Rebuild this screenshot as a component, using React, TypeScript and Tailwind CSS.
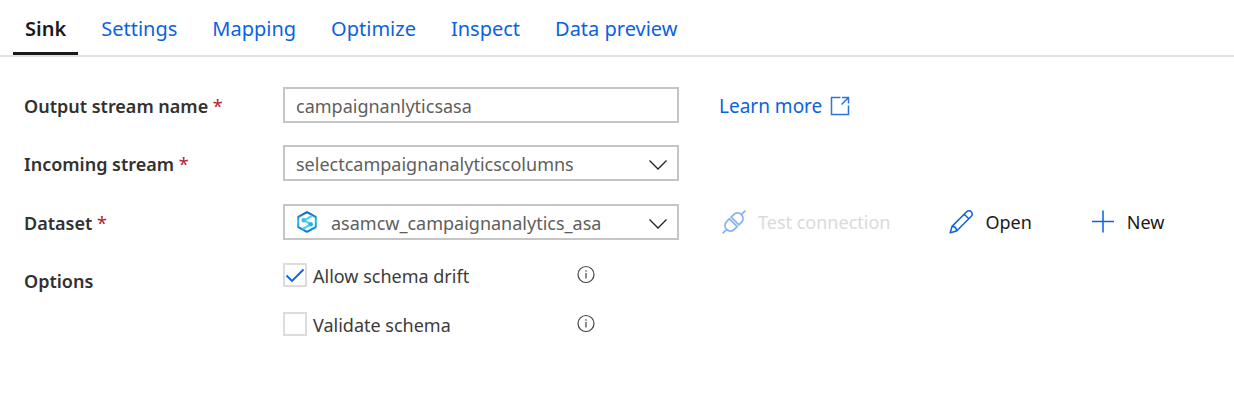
import React, { useState } from "react";

const tabs = ["Sink", "Settings", "Mapping", "Optimize", "Inspect", "Data preview"];

function Required() {
  return <span className="font-normal text-[#b3202c]"> *</span>;
}

function Chevron() {
  return (
    <svg className="pointer-events-none absolute top-[14px] right-[11px] h-3 w-5" viewBox="0 0 20 12" fill="none" stroke="#222" strokeWidth="1.3" aria-hidden="true">
      <path d="M1.500 1.500 10 10 18.500 1.500" />
    </svg>
  );
}

function SynapseIcon() {
  return (
    <svg className="pointer-events-none absolute top-[7px] left-3 h-[22px] w-6" viewBox="0 0 24 22" fill="none" aria-hidden="true">
      <defs>
        <linearGradient id="hexagon" x1="0" y1="0" x2="0" y2="1">
          <stop offset="0" stopColor="#0f5fb3" />
          <stop offset="0.450" stopColor="#35b8ec" />
          <stop offset="1" stopColor="#0878d4" />
        </linearGradient>
      </defs>
      <path d="M12 1.200 20.800 6v10L12 20.800 3.200 16V6Z" stroke="url(#hexagon)" strokeWidth="2" strokeLinejoin="round" />
      <path d="M17 4.800 9 9.300l7 4L7.500 18" stroke="#45d3ef" strokeWidth="2" />
      <circle cx="8.700" cy="9.200" r="2.200" fill="#35c1e8" />
      <circle cx="15.800" cy="13.300" r="2.200" fill="#28b5e6" />
    </svg>
  );
}

function ExternalIcon() {
  return (
    <svg className="h-5 w-5" viewBox="0 0 20 20" fill="none" stroke="#2b74e2" strokeWidth="1.500" aria-hidden="true">
      <path d="M10.500 1.500h-9v17h17V9.500M12 1.500h6.500v6M18.500 1.500l-7 7" />
    </svg>
  );
}

function PlugIcon() {
  return (
    <svg className="h-6 w-6" viewBox="0 0 24 24" fill="none" stroke="#85b2f3" strokeWidth="1.700" aria-hidden="true">
      <g transform="rotate(-45 12 12)">
        <path d="M-4 12H1.500M22.500 12H28M11 6.500v11H7a5.500 5.500 0 0 1 0-11ZM13.500 6.500v11H17a5.500 5.500 0 0 0 0-11Z" />
      </g>
    </svg>
  );
}

function PencilIcon() {
  return (
    <svg className="h-6 w-6" viewBox="0 0 24 24" fill="none" stroke="#0b62e0" strokeWidth="1.500" strokeLinejoin="round" aria-hidden="true">
      <path d="M1.200 22.800 3 16.400 17.700 1.700a3.200 3.200 0 0 1 4.600 4.600L7.600 21ZM15.200 4.200 19.800 8.800M3 16.400c2.800 0 4.600 1.800 4.600 4.600" />
    </svg>
  );
}

function PlusIcon() {
  return (
    <svg className="h-6 w-6" viewBox="0 0 24 24" fill="none" stroke="#0b62e0" strokeWidth="1.500" aria-hidden="true">
      <path d="M12 0.500v22M1 11.500h22" />
    </svg>
  );
}

function InfoButton({ label }: { label: string }) {
  return (
    <button type="button" aria-label={label} className="h-5 w-5">
      <svg viewBox="0 0 20 20" fill="none" stroke="#444" strokeWidth="1.200" aria-hidden="true">
        <circle cx="10" cy="9.500" r="8" />
        <path d="M10 8v5.500M10 5.300v1.400" />
      </svg>
    </button>
  );
}

function Option({ id, label, initial }: { id: string; label: string; initial: boolean }) {
  const [checked, setChecked] = useState(initial);
  return (
    <div className="flex h-6 items-center">
      <div className="flex w-[293px] items-center gap-[6px]">
        <span className="relative h-6 w-6 shrink-0">
          <input id={id} type="checkbox" checked={checked} onChange={(e) => setChecked(e.target.checked)} className="block h-6 w-6 appearance-none border-2 border-[#dcdcdc] bg-white" />
          {checked && (
            <svg className="pointer-events-none absolute inset-0" viewBox="0 0 24 24" fill="none" stroke="#0b62e0" strokeWidth="1.800" aria-hidden="true">
              <path d="M3.500 12.500 9 18 20.500 6.500" />
            </svg>
          )}
        </span>
        <label htmlFor={id} className="pt-0.5 text-[18px] leading-6 text-[#3c3b3a]">{label}</label>
      </div>
      <InfoButton label={"About " + label} />
    </div>
  );
}

const labelStyle = "self-start pt-[7px] text-[18px] font-semibold leading-6 text-[#323130]";
const fieldStyle = "block h-9 w-full appearance-none border-2 border-[#c5c5c5] bg-white text-[18px] text-[#605e5c]";

export default function App() {
  const [active, setActive] = useState("Sink");
  const [name, setName] = useState("campaignanlyticsasa");
  return (
    <main className="min-h-screen bg-white font-['Noto_Sans','Open_Sans',sans-serif] text-[#323130]">
      <nav role="tablist" className="flex gap-[11px] border-b-2 border-[#e2e2e2] pl-[13px]">
        {tabs.map((tab) => (
          <button
            key={tab}
            type="button"
            role="tab"
            aria-selected={tab === active}
            onClick={() => setActive(tab)}
            className={
              tab === active
                ? "h-[55px] border-b-3 border-[#1b1a19] px-3 pt-1.5 text-[20px] font-semibold text-[#1b1a19]"
                : "h-[55px] border-b-3 border-transparent px-3 pt-1.5 text-[20px] text-[#0b62e0]"
            }
          >
            {tab}
          </button>
        ))}
      </nav>
      <form className="grid grid-cols-[259px_396px_1fr] grid-rows-[36px_37px_37px_auto] gap-y-[22px] pt-[30px] pl-6" onSubmit={(e) => e.preventDefault()}>
        <label htmlFor="output" className={labelStyle}>Output stream name<Required /></label>
        <input id="output" value={name} onChange={(e) => setName(e.target.value)} className={fieldStyle + " px-[11px] pt-1.5 pb-1"} />
        <a href="#learn" className="ml-10 flex items-center gap-2 justify-self-start pt-0.5 text-[19px] leading-6 text-[#0b62e0]">
          Learn more
          <ExternalIcon />
        </a>

        <label htmlFor="incoming" className={labelStyle}>Incoming stream<Required /></label>
        <div className="relative">
          <select id="incoming" className={fieldStyle + " px-[11px] py-1"}>
            <option>selectcampaignanalyticscolumns</option>
          </select>
          <Chevron />
        </div>
        <span />

        <label htmlFor="dataset" className={labelStyle}>Dataset<Required /></label>
        <div className="relative">
          <SynapseIcon />
          <select id="dataset" className={fieldStyle + " py-1 pl-[46px]"}>
            <option>asamcw_campaignanalytics_asa</option>
          </select>
          <Chevron />
        </div>
        <div className="ml-[43px] flex h-9 items-center gap-[59px] text-[18px] leading-6 text-[#1b1a19]">
          <button type="button" disabled className="flex items-center gap-3 text-[#dadada]"><PlugIcon />Test connection</button>
          <button type="button" className="flex items-center gap-3"><PencilIcon />Open</button>
          <button type="button" className="flex items-center gap-3"><PlusIcon />New</button>
        </div>

        <span className="pt-1.5 text-[18px] font-semibold leading-6">Options</span>
        <div className="flex flex-col gap-[25px]">
          <Option id="drift" label="Allow schema drift" initial={true} />
          <Option id="validate" label="Validate schema" initial={false} />
        </div>
      </form>
    </main>
  );
}
